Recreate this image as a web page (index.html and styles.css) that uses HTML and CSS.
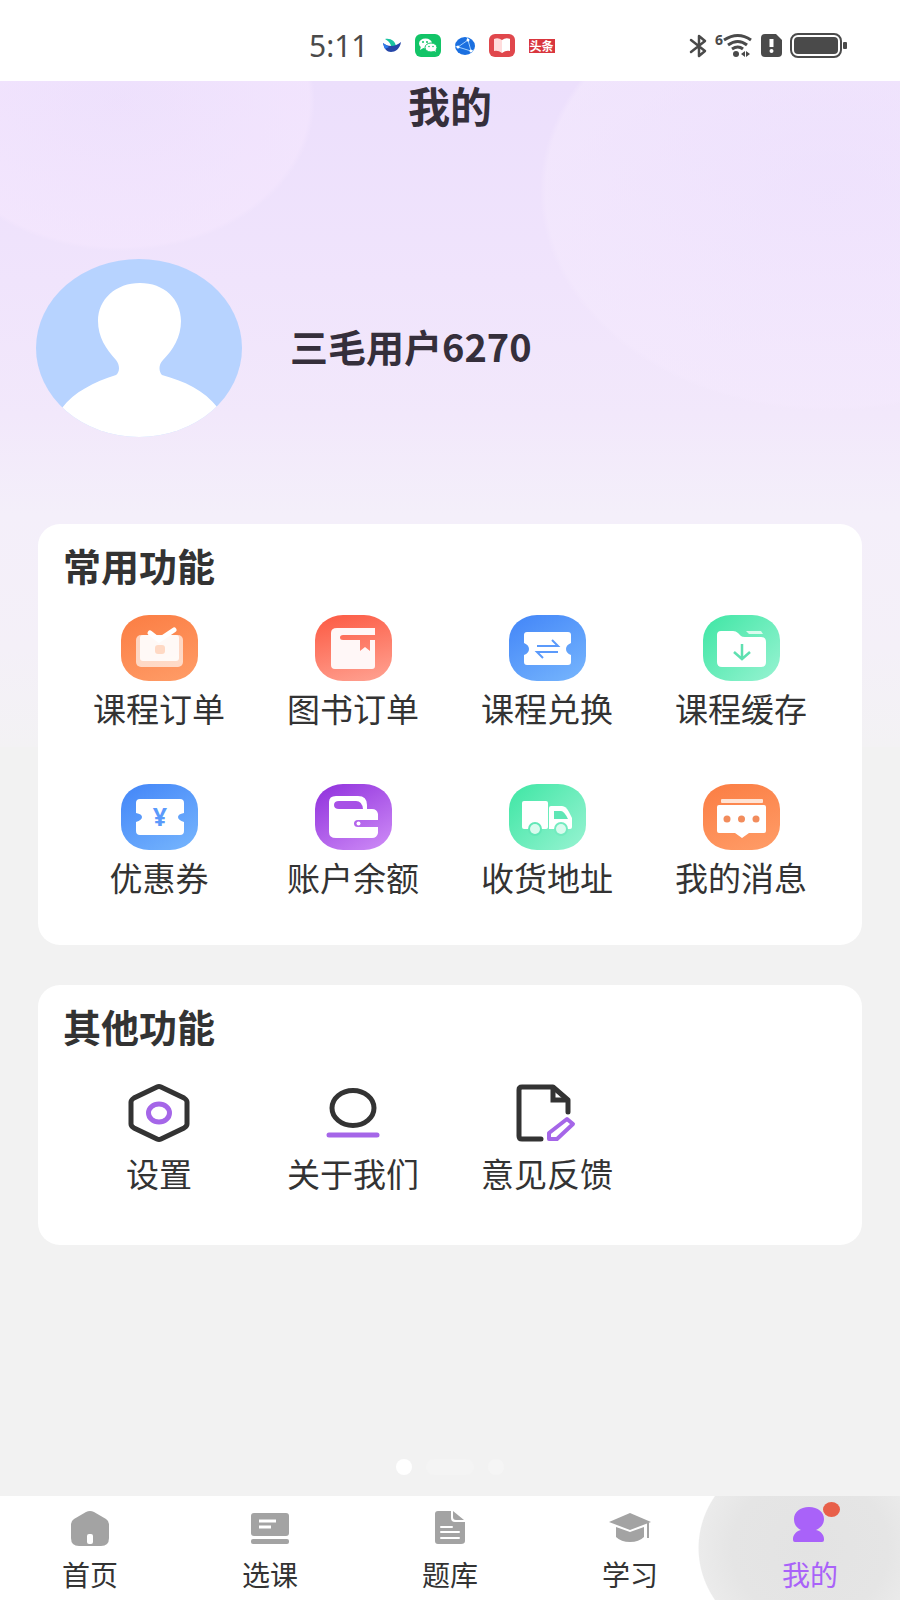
FILE: index.html
```html
<!DOCTYPE html>
<html lang="zh-CN">
<head>
    <meta charset="UTF-8">
    <meta name="viewport" content="width=device-width, initial-scale=1.0">
    <title>我的</title>
    <link rel="stylesheet" href="styles.css">
</head>
<body>

    <div class="status-bar">
        <div class="status-left">
            <span class="time">5:11</span>
            <svg width="18" height="16" viewBox="0 0 18 16">
                <path d="M2 1C8 0 12 3 13 8L8 9C8 5 5 3 2 1Z" fill="#19c3a0"/>
                <path d="M0 5C5 9 12 9 18 4C17 11 12 14 8 14C4 14 1 11 0 5Z" fill="#2546a8"/>
                <path d="M0 5L2 11L6 9Z" fill="#2f7df0"/>
            </svg>
            <svg width="26" height="23" viewBox="0 0 26 23">
                <rect width="26" height="23" rx="6" fill="#12c467"/>
                <ellipse cx="10.500" cy="9.500" rx="6.500" ry="5" fill="#fff"/>
                <path d="M6 12L5 16L10 13Z" fill="#fff"/>
                <ellipse cx="16" cy="13.500" rx="6" ry="4.500" fill="#fff" stroke="#12c467"/>
                <path d="M18 16L21 18L20 15Z" fill="#fff"/>
                <circle cx="8" cy="8" r="1" fill="#12c467"/>
                <circle cx="12" cy="8" r="1" fill="#12c467"/>
                <circle cx="14" cy="12.500" r="0.800" fill="#12c467"/>
                <circle cx="18" cy="12.500" r="0.800" fill="#12c467"/>
            </svg>
            <svg width="20" height="18" viewBox="0 0 20 18">
                <ellipse cx="10" cy="9" rx="10" ry="9" fill="#1a6fe0"/>
                <path d="M3 10L13 3L16 14ZM3 10L0 9M13 3L12 0M16 14L19 13" fill="none" stroke="#9fd0ff"/>
                <circle cx="3" cy="10" r="1.500" fill="#fff"/>
                <circle cx="13" cy="3" r="1.500" fill="#fff"/>
                <circle cx="16" cy="14" r="1.500" fill="#fff"/>
            </svg>
            <svg width="26" height="23" viewBox="0 0 26 23">
                <rect width="26" height="23" rx="6" fill="#e0474c"/>
                <path d="M5 5Q9 3 13 6V19Q9 16 5 17Z" fill="#ffdcdc"/>
                <path d="M21 5Q17 3 13 6V19Q17 16 21 17Z" fill="#fff"/>
            </svg>
            <span class="news">头条</span>
        </div>
        <div class="status-right">
            <svg width="17" height="24" viewBox="0 0 17 24">
                <path d="M1 6L15 17L9 22V2L15 7L1 18" fill="none" stroke="#4a4a4a" stroke-width="2.500" stroke-linejoin="round" stroke-linecap="round"/>
            </svg>
            <svg width="38" height="24" viewBox="0 0 38 24">
                <text x="0" y="11" class="wifi-gen">6</text>
                <path d="M9 6Q23 -3 36 6M13 11Q23 4 32 11M17 15Q23 11 28 15" fill="none" stroke="#4a4a4a" stroke-width="3"/>
                <circle cx="21" cy="20" r="3" fill="#4a4a4a"/>
                <path d="M30 17V23L26 20ZM31 17V23L35 20Z" fill="#4a4a4a"/>
            </svg>
            <svg width="21" height="23" viewBox="0 0 21 23">
                <path d="M4 0H15L21 6V19Q21 23 17 23H4Q0 23 0 19V4Q0 0 4 0Z" fill="#4a4a4a"/>
                <path d="M10.500 5V13" stroke="#fff" stroke-width="4"/>
                <circle cx="10.500" cy="17" r="2" fill="#fff"/>
            </svg>
            <svg width="57" height="25" viewBox="0 0 57 25">
                <rect x="1" y="1" width="50" height="23" rx="7" fill="none" stroke="#4a4a4a" stroke-width="2"/>
                <rect x="4" y="4" width="44" height="17" rx="4" fill="#4a4a4a"/>
                <rect x="53" y="9" width="4" height="7" rx="1" fill="#4a4a4a"/>
            </svg>
        </div>
    </div>

    <main class="page">
        <h1>我的</h1>

        <div class="profile">
            <svg width="206" height="178" viewBox="0 0 206 178">
                <clipPath id="avatarClip"><ellipse cx="103" cy="89" rx="103" ry="89"/></clipPath>
                <g clip-path="url(#avatarClip)">
                    <rect width="206" height="178" fill="#b7d3ff"/>
                    <path d="M104 24C128 24 145 40 145 62C145 78 137 91 127 101C122 106 123 113 126 116C148 122 168 131 182 149V180H26V149C38 133 58 123 80 116C84 113 84 106 80 101C70 90 62 78 62 62C62 40 80 24 104 24Z" fill="#fff"/>
                </g>
            </svg>
            <span class="user-name">三毛用户6270</span>
        </div>

        <section class="card">
            <h2>常用功能</h2>
            <div class="grid">
                <a class="item" href="#">
                    <span class="tile orange">
                        <svg width="77" height="66" viewBox="0 0 77 66">
                            <rect x="15" y="20" width="47" height="32" rx="5" fill="#fff" opacity="0.650"/>
                            <path d="M29 18L38 25L53 15" fill="none" stroke="#fff" stroke-width="5" stroke-linecap="round"/>
                            <rect x="19" y="20" width="39" height="26" rx="3" fill="#fff" opacity="0.850"/>
                            <rect x="34" y="30" width="10" height="9" rx="3" fill="#ffd9c4"/>
                        </svg>
                    </span>
                    <span class="label">课程订单</span>
                </a>
                <a class="item" href="#">
                    <span class="tile red">
                        <svg width="77" height="66" viewBox="0 0 77 66">
                            <path d="M22 13H60V20H28Q25 20 25 22.500Q25 25 28 25H45V36L50 32L55 36V25H60V51Q60 54 57 54H20Q16 54 16 50V18Q16 13 22 13Z" fill="#fff7f7"/>
                        </svg>
                    </span>
                    <span class="label">图书订单</span>
                </a>
                <a class="item" href="#">
                    <span class="tile blue">
                        <svg width="77" height="66" viewBox="0 0 77 66">
                            <path d="M18 17H59Q62 17 62 20V28Q57 30 57 34Q57 38 62 40V47Q62 50 59 50H18Q15 50 15 47V40Q20 38 20 34Q20 30 15 28V20Q15 17 18 17Z" fill="#fff"/>
                            <path d="M28 31H49L43 25M49 37H28L34 43" fill="none" stroke="#5b9afb" stroke-width="2"/>
                        </svg>
                    </span>
                    <span class="label">课程兑换</span>
                </a>
                <a class="item" href="#">
                    <span class="tile green">
                        <svg width="77" height="66" viewBox="0 0 77 66">
                            <path d="M18 16H30Q33 16 35 18L38 21Q39 22 42 22H58Q63 22 63 27V47Q63 52 58 52H19Q14 52 14 47V20Q14 16 18 16Z" fill="#fff"/>
                            <path d="M43 16H58L60 19H46Z" fill="#fff" opacity="0.750"/>
                            <path d="M39 29V44M31 37L39 44L47 37" fill="none" stroke="#5fe0b0" stroke-width="2.500"/>
                        </svg>
                    </span>
                    <span class="label">课程缓存</span>
                </a>
                <a class="item" href="#">
                    <span class="tile blue">
                        <svg width="77" height="66" viewBox="0 0 77 66">
                            <path d="M19 15H59Q63 15 63 19V29Q57 30 57 33Q57 36 63 38V47Q63 51 59 51H19Q15 51 15 47V38Q21 36 21 33Q21 30 15 29V19Q15 15 19 15Z" fill="#fff"/>
                            <text x="39" y="42" class="yuan">¥</text>
                        </svg>
                    </span>
                    <span class="label">优惠券</span>
                </a>
                <a class="item" href="#">
                    <span class="tile purple">
                        <svg width="77" height="66" viewBox="0 0 77 66">
                            <path d="M21 12H43Q52 12 52 21V25H57Q62 25 63 30V36H43Q39 36 39 39.500Q39 43 43 43H63V49Q62 54 57 54H21Q14 54 14 48V18Q14 12 21 12Z" fill="#fff"/>
                            <path d="M24 17H41Q47 17 48 25H24Q19 25 19 21Q19 17 24 17Z" fill="#a750e6"/>
                            <circle cx="43.500" cy="39.500" r="2" fill="#fff"/>
                        </svg>
                    </span>
                    <span class="label">账户余额</span>
                </a>
                <a class="item" href="#">
                    <span class="tile green">
                        <svg width="77" height="66" viewBox="0 0 77 66">
                            <rect x="13" y="17" width="26" height="28" rx="2" fill="#fff"/>
                            <path d="M42 22H53Q57 22 60 28L63 34V43Q63 45 61 45H40V24Q40 22 42 22Z" fill="#fff"/>
                            <path d="M45 27H52Q55 27 59 35H45Z" fill="#5fe6b5"/>
                            <circle cx="26" cy="45" r="7" fill="#62e7b7"/>
                            <circle cx="26" cy="45" r="5" fill="#d9fbee"/>
                            <circle cx="52" cy="45" r="7" fill="#72ebbf"/>
                            <circle cx="52" cy="45" r="5" fill="#d9fbee"/>
                        </svg>
                    </span>
                    <span class="label">收货地址</span>
                </a>
                <a class="item" href="#">
                    <span class="tile orange">
                        <svg width="77" height="66" viewBox="0 0 77 66">
                            <rect x="18" y="15" width="42" height="4" rx="1" fill="#ffe3d4"/>
                            <path d="M16 21H61Q63 21 63 23V47Q63 49 61 49H46L39 54L32 49H16Q14 49 14 47V23Q14 21 16 21Z" fill="#fff"/>
                            <circle cx="24" cy="35" r="3.500" fill="#f28c5c"/>
                            <circle cx="38.500" cy="35" r="3.500" fill="#f28c5c"/>
                            <circle cx="53" cy="35" r="3.500" fill="#f28c5c"/>
                        </svg>
                    </span>
                    <span class="label">我的消息</span>
                </a>
            </div>
        </section>

        <section class="card others">
            <h2>其他功能</h2>
            <div class="grid">
                <a class="item" href="#">
                    <span class="tile">
                        <svg width="64" height="58" viewBox="0 0 64 58">
                            <path d="M30 3Q32 2 34 3L57 14Q60 16 60 18V40Q60 42 57 44L34 55Q32 56 30 55L7 44Q4 42 4 40V18Q4 16 7 14Z" fill="none" stroke="#333" stroke-width="5"/>
                            <ellipse cx="32" cy="29" rx="10.500" ry="9" fill="none" stroke="#a566e8" stroke-width="5"/>
                        </svg>
                    </span>
                    <span class="label">设置</span>
                </a>
                <a class="item" href="#">
                    <span class="tile">
                        <svg width="64" height="58" viewBox="0 0 64 58">
                            <ellipse cx="32" cy="24" rx="21" ry="17.500" fill="none" stroke="#333" stroke-width="5"/>
                            <path d="M8 51H56" stroke="#a566e8" stroke-width="5" stroke-linecap="round"/>
                        </svg>
                    </span>
                    <span class="label">关于我们</span>
                </a>
                <a class="item" href="#">
                    <span class="tile">
                        <svg width="64" height="58" viewBox="0 0 64 58">
                            <path d="M26 55H7Q4 55 4 52V6Q4 3 7 3H38L53 16V28" fill="none" stroke="#333" stroke-width="5" stroke-linecap="round" stroke-linejoin="round"/>
                            <path d="M38 4V16H52" fill="none" stroke="#333" stroke-width="5"/>
                            <path d="M52 35L58 40L42 55H34V49Z" fill="none" stroke="#a566e8" stroke-width="4" stroke-linejoin="round"/>
                        </svg>
                    </span>
                    <span class="label">意见反馈</span>
                </a>
            </div>
        </section>

        <div class="dots">
            <span class="dot active"></span>
            <span class="dot wide"></span>
            <span class="dot"></span>
        </div>
    </main>

    <nav class="tabbar">
        <a class="tab" href="#">
            <svg width="44" height="38" viewBox="0 0 44 38">
                <path d="M18 2Q22 0 26 2L38 9Q41 11 41 14V28Q41 36 33 36H11Q3 36 3 28V14Q3 11 6 9Z" fill="#a3a3a3"/>
                <rect x="19" y="24" width="6" height="10" rx="2" fill="#fff"/>
            </svg>
            <span>首页</span>
        </a>
        <a class="tab" href="#">
            <svg width="44" height="38" viewBox="0 0 44 38">
                <rect x="3" y="3" width="38" height="23" rx="3" fill="#a3a3a3"/>
                <rect x="3" y="29" width="38" height="5" rx="2" fill="#a3a3a3"/>
                <path d="M11 11H28M11 17H23" stroke="#fff" stroke-width="3"/>
            </svg>
            <span>选课</span>
        </a>
        <a class="tab" href="#">
            <svg width="44" height="38" viewBox="0 0 44 38">
                <path d="M10 1H23V8Q23 12 27 12H37V31Q37 34 33 34H10Q7 34 7 31V4Q7 1 10 1Z" fill="#a3a3a3"/>
                <path d="M25 1L36 10H28Q25 10 25 7Z" fill="#a3a3a3"/>
                <path d="M13 17H24M13 22H31M13 28H31" stroke="#fff" stroke-width="2" stroke-linecap="round"/>
            </svg>
            <span>题库</span>
        </a>
        <a class="tab" href="#">
            <svg width="44" height="38" viewBox="0 0 44 38">
                <path d="M22 3L43 12L22 20L1 12Z" fill="#a3a3a3"/>
                <path d="M8 17L22 22L36 17V27Q31 32 22 32Q13 32 8 27Z" fill="#a3a3a3"/>
                <path d="M40 13V28" stroke="#a3a3a3" stroke-width="2"/>
            </svg>
            <span>学习</span>
        </a>
        <a class="tab active" href="#">
            <svg width="44" height="38" viewBox="0 0 44 38">
                <path d="M21 -3C30 -3 36 2 36 9C36 15 32 18 28 20C33 21 36 25 36 29V30Q36 32 34 32H7Q5 32 5 30V29C5 25 8 21 13 20C9 18 6 15 6 9C6 2 12 -3 21 -3Z" fill="#a962f9"/>
            </svg>
            <span class="badge"></span>
            <span>我的</span>
        </a>
    </nav>

</body>
</html>
```

FILE: styles.css
```css
* {
    box-sizing: border-box;
}

body {
    margin: 0;
    min-height: 100vh;
    display: flex;
    flex-direction: column;
    background-color: #f2f2f2;
    color: #333;
    font-family: "Noto Sans CJK SC", sans-serif;
}

a {
    color: inherit;
    text-decoration: none;
}

svg {
    display: block;
    flex-shrink: 0;
    overflow: visible;
}

/* Barra de estado */
.status-bar {
    height: 81px;
    padding: 10px 53px 0 309px;
    display: flex;
    justify-content: space-between;
    align-items: center;
    background: #fff;
}

.status-left,
.status-right {
    display: flex;
    align-items: center;
}

.status-left {
    gap: 14px;
}

.status-right {
    gap: 8px;
}

.time {
    font-family: "Noto Sans", sans-serif;
    font-size: 30px;
    line-height: 32px;
    color: #4a4a4a;
}

.news {
    padding: 0 1px;
    background: #d9363e;
    color: #fff;
    font-size: 12px;
    line-height: 14px;
    font-weight: bold;
}

.wifi-gen {
    font-family: "Noto Sans", sans-serif;
    font-size: 14px;
    font-weight: bold;
    fill: #4a4a4a;
}

.page {
    flex: 1;
    display: flex;
    flex-direction: column;
    padding: 0 38px;
    background-repeat: no-repeat;
    background-size: 100% 666px;
    background-image:
        radial-gradient(ellipse 195px 150px at 120px 20px, rgba(244, 230, 254, 0.2) 0%, rgba(245, 231, 254, 0.6) 97%, transparent 100%),
        radial-gradient(ellipse 290px 220px at 830px 110px, rgba(240, 228, 254, 0.3) 0%, rgba(244, 233, 253, 0.6) 98%, transparent 100%),
        linear-gradient(#ecdffc 0%, #f0e4fc 30%, #f2e8fb 50%, #f4effa 65%, #f4f0f8 85%, #f3f2f4 100%);
}

h1 {
    margin: 0;
    padding-top: 2px;
    font-size: 42px;
    line-height: 44px;
    text-align: center;
    color: #352f3b;
}

.profile {
    display: flex;
    align-items: center;
    gap: 48px;
    margin: 132px -2px 87px;
}

.user-name {
    padding-bottom: 4px;
    font-size: 38px;
    line-height: 40px;
    font-weight: bold;
    color: #352f3b;
}

.card {
    margin-bottom: 40px;
    padding: 22px 24px 50px;
    border-radius: 22px;
    background: #fff;
}

.card.others {
    padding-bottom: 54px;
}

h2 {
    margin: 0 0 31px;
    padding-left: 1px;
    font-size: 38px;
    line-height: 38px;
}

.others h2 {
    margin-bottom: 35px;
}

.grid {
    display: grid;
    grid-template-columns: repeat(4, 1fr);
    row-gap: 58px;
}

.item {
    display: flex;
    flex-direction: column;
    align-items: center;
    gap: 9px;
}

.tile {
    width: 77px;
    height: 66px;
    border-radius: 28px / 25px;
    display: flex;
    align-items: center;
    justify-content: center;
}

.orange {
    background: linear-gradient(160deg, #fb7d43, #ff9d68);
}

.red {
    background: linear-gradient(165deg, #fc5942, #ffa393);
}

.blue {
    background: linear-gradient(150deg, #4285f8, #77b6fd);
}

.green {
    background: linear-gradient(135deg, #3ee6a4, #98f3d2);
}

.purple {
    background: linear-gradient(150deg, #8f2fdc, #cf8df7);
}

.yuan {
    font-family: "Noto Sans", sans-serif;
    font-size: 25px;
    font-weight: bold;
    text-anchor: middle;
    fill: #5b9afb;
}

.label {
    font-size: 33px;
    line-height: 36px;
    white-space: nowrap;
}

.dots {
    display: flex;
    align-items: center;
    justify-content: center;
    gap: 14px;
    margin-top: auto;
    padding-bottom: 21px;
}

.dot {
    width: 16px;
    height: 16px;
    border-radius: 8px;
    background: #f5f5f5;
}

.dot.wide {
    width: 48px;
    background: #f4f4f4;
}

.dot.active {
    background: #fff;
}

/* Menú inferior */
.tabbar {
    display: flex;
    height: 104px;
    padding-top: 14px;
    background: radial-gradient(ellipse 112px 100px at 90% 50%, #e3e3e3 0%, #e5e5e5 70%, #ebebeb 99%, #fff 100%);
}

.tab {
    position: relative;
    flex: 1;
    display: flex;
    flex-direction: column;
    align-items: center;
    gap: 8px;
    font-size: 28px;
    line-height: 36px;
}

.tab.active {
    color: #a962f9;
}

.badge {
    position: absolute;
    top: -8px;
    left: 50%;
    width: 17px;
    height: 15px;
    margin-left: 13px;
    border-radius: 50%;
    background: #e8604a;
}
```
